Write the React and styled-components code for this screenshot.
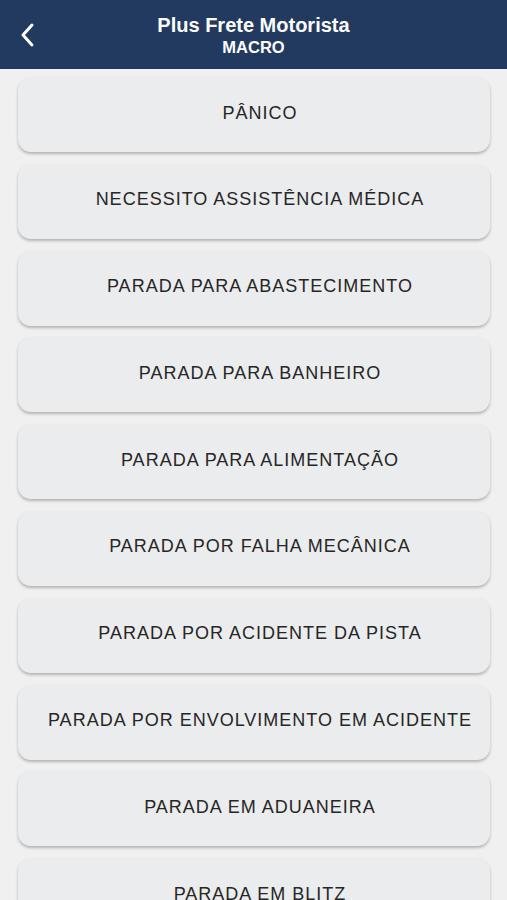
import React from "react";
import styled, { createGlobalStyle } from "styled-components";

const GlobalStyle = createGlobalStyle`
  body {
    margin: 0;
    background-color: #f0f0f0;
    font-family: "Liberation Sans", Arial, sans-serif;
  }
`;

const Screen = styled.div`
  min-height: 100vh;
  background-color: #f0f0f0;
  overflow: hidden;
`;

const Header = styled.div`
  height: 69px;
  background-color: #223a5f;
  color: white;
  display: flex;
  align-items: center;
  position: relative;
`;

const BackButton = styled.button`
  position: absolute;
  left: 14px;
  top: 20px;
  background: none;
  border: none;
  padding: 0;
  width: 28px;
  height: 30px;
  display: flex;
  align-items: center;
  justify-content: center;
`;

const Titles = styled.div`
  flex: 1;
  display: flex;
  flex-direction: column;
  align-items: center;
  padding-top: 1px;
`;

const Title = styled.div`
  font-size: 20px;
  font-weight: bold;
  line-height: 24px;
`;

const Subtitle = styled.div`
  font-size: 16.5px;
  font-weight: bold;
  line-height: 20px;
`;

const List = styled.div`
  display: flex;
  flex-direction: column;
  gap: 11.8px;
  padding: 8px 17px 0 18px;
`;

const Option = styled.button`
  height: 75px;
  flex-shrink: 0;
  border: none;
  border-radius: 13px;
  background-color: #ebecee;
  box-shadow: 0 2px 3px rgba(0, 0, 0, 0.25);
  color: #262626;
  font-family: "Liberation Sans", Arial, sans-serif;
  font-size: 18px;
  letter-spacing: 1px;
  padding: 0 0 3px 12px;
  display: flex;
  align-items: center;
  justify-content: center;
  white-space: nowrap;
`;

const options = [
  "PÂNICO",
  "NECESSITO ASSISTÊNCIA MÉDICA",
  "PARADA PARA ABASTECIMENTO",
  "PARADA PARA BANHEIRO",
  "PARADA PARA ALIMENTAÇÃO",
  "PARADA POR FALHA MECÂNICA",
  "PARADA POR ACIDENTE DA PISTA",
  "PARADA POR ENVOLVIMENTO EM ACIDENTE",
  "PARADA EM ADUANEIRA",
  "PARADA EM BLITZ",
];

const App = () => {
  return (
    <Screen>
      <GlobalStyle />
      <Header>
        <BackButton>
          <svg width="16" height="26" viewBox="0 0 16 26">
            <path
              d="M12 3 L3 13 L12 23"
              fill="none"
              stroke="white"
              strokeWidth="3"
              strokeLinecap="round"
              strokeLinejoin="round"
            />
          </svg>
        </BackButton>
        <Titles>
          <Title>Plus Frete Motorista</Title>
          <Subtitle>MACRO</Subtitle>
        </Titles>
      </Header>
      <List>
        {options.map((o) => (
          <Option key={o}>{o}</Option>
        ))}
      </List>
    </Screen>
  );
};

export default App;
